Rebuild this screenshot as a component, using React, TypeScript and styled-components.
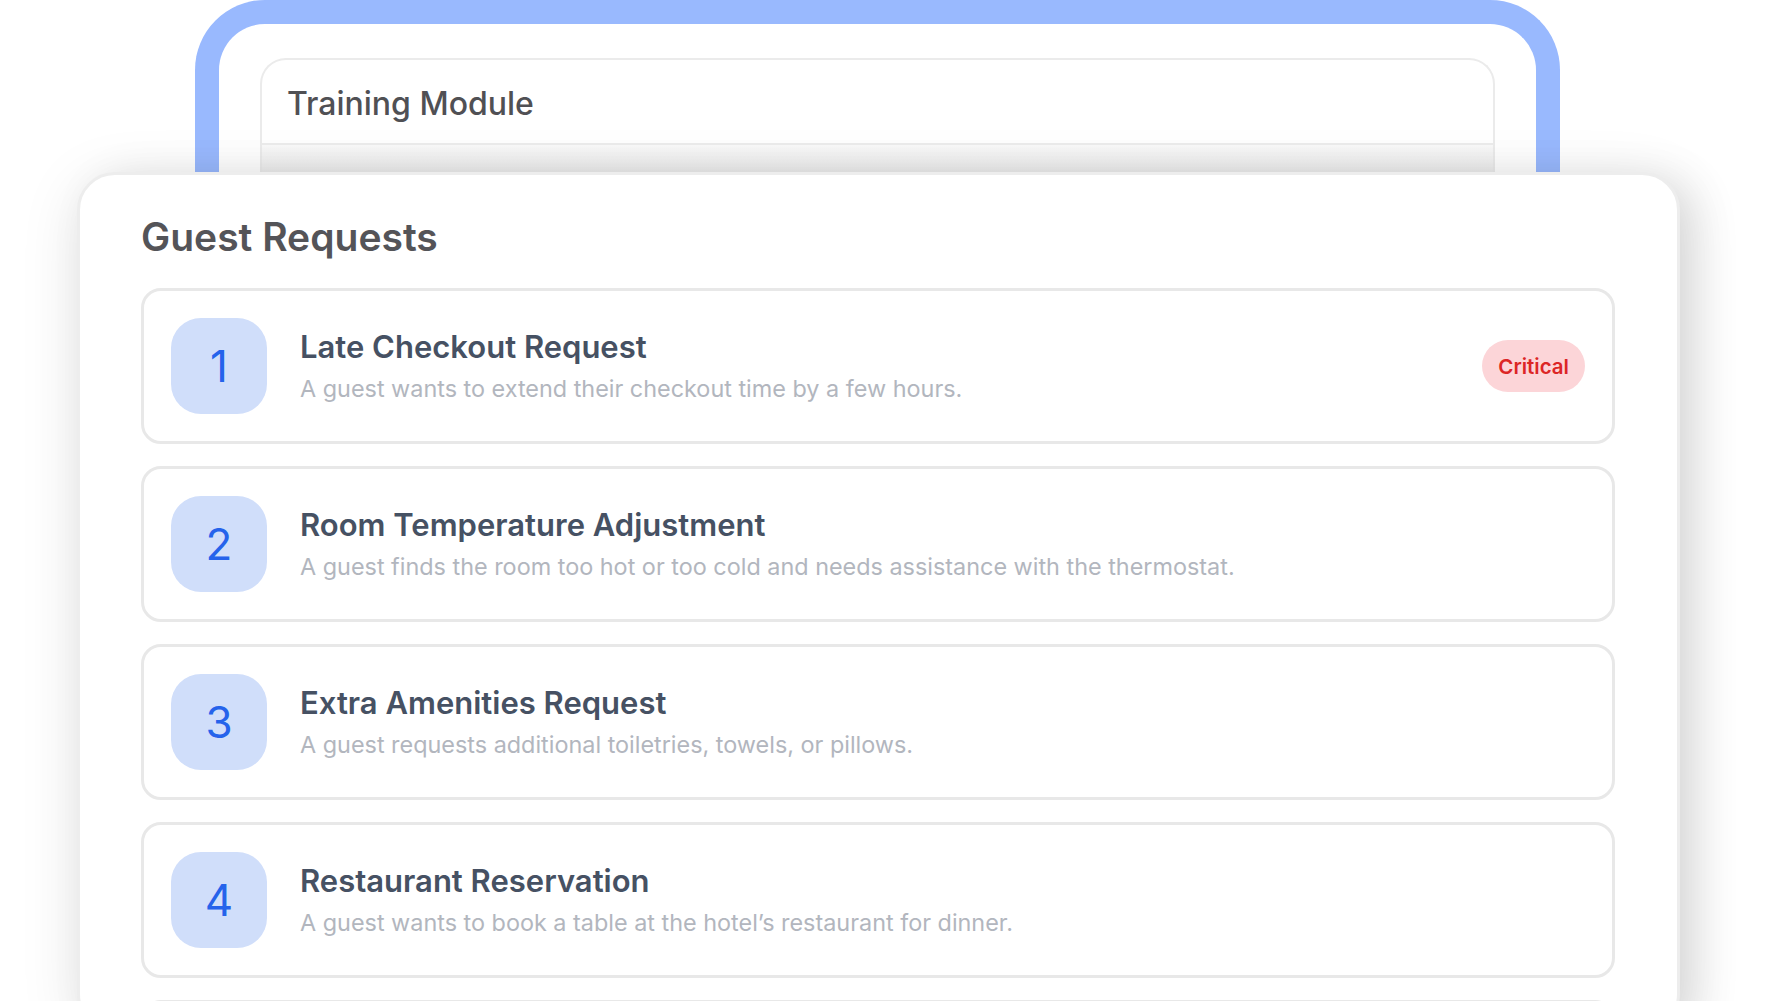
import { FC } from 'react'
import styled, { createGlobalStyle } from 'styled-components'

const GlobalStyle = createGlobalStyle`
  html, body {
    margin: 0;
    padding: 0;
    background: #fff;
    overflow: hidden;
  }
  body {
    font-family: Inter, "Noto Sans", "Liberation Sans", sans-serif;
    -webkit-font-smoothing: antialiased;
  }
  * {
    box-sizing: border-box;
  }
`

const Page = styled.div`
  width: 1765px;
  height: 1001px;
  overflow: hidden;
  background: #fff;
`

const DeviceFrame = styled.div`
  margin-left: 195px;
  width: 1365px;
  height: 172px;
  border: 24px solid #99b9fe;
  border-bottom: none;
  border-radius: 70px 70px 0 0;
  background: #fff;
  padding: 34px 41px 0;
  overflow: hidden;
`

const ModuleCard = styled.div`
  height: 100%;
  border: 2px solid #ebebeb;
  border-bottom: none;
  border-radius: 26px 26px 0 0;
  display: flex;
  flex-direction: column;
  overflow: hidden;
`

const ModuleHeader = styled.div`
  height: 85px;
  flex: none;
  display: flex;
  align-items: center;
  padding: 4px 0 0 25px;
  border-bottom: 2px solid #ececec;
  font-size: 32px;
  line-height: 38px;
  font-weight: 500;
  color: #505054;
`

const ModuleBody = styled.div`
  flex: 1;
  background: linear-gradient(#f9f9f9, #ededed);
`

const Panel = styled.div`
  position: relative;
  z-index: 1;
  margin-left: 77px;
  width: 1603px;
  height: 860px;
  background: #fff;
  border: 3px solid #ededed;
  border-radius: 38px;
  padding: 38px 62px 0 61px;
  box-shadow: 0 10px 60px rgba(0, 0, 0, 0.1), 18px 6px 44px rgba(0, 0, 0, 0.1);
`

const PanelTitle = styled.div`
  font-size: 39px;
  line-height: 48px;
  font-weight: 600;
  color: #545458;
  margin-bottom: 27px;
`

const RequestList = styled.div`
  display: flex;
  flex-direction: column;
  gap: 22px;
`

const RequestCard = styled.div`
  display: flex;
  align-items: center;
  gap: 33px;
  height: 156px;
  padding: 0 27px;
  border: 3px solid #e8e8e8;
  border-radius: 20px;
  background: #fff;
`

const NumberBox = styled.div`
  flex: none;
  width: 96px;
  height: 96px;
  border-radius: 30px;
  background: #d0defa;
  color: #2563eb;
  font-size: 44px;
  font-weight: 400;
  display: flex;
  align-items: center;
  justify-content: center;
`

const RequestText = styled.div`
  flex: 1;
  display: flex;
  flex-direction: column;
  gap: 8px;
`

const RequestTitle = styled.div`
  font-size: 31px;
  line-height: 38px;
  font-weight: 600;
  color: #465163;
`

const RequestDesc = styled.div`
  font-size: 23.4px;
  line-height: 30px;
  color: #b2b6be;
`

const Badge = styled.div<{ $tone: 'critical' }>`
  flex: none;
  height: 52px;
  padding: 0 16px;
  border-radius: 26px;
  display: flex;
  align-items: center;
  font-size: 20.5px;
  font-weight: 600;
  background: ${(p) => (p.$tone === 'critical' ? '#fcd5d8' : '#eee')};
  color: ${(p) => (p.$tone === 'critical' ? '#dc2626' : '#555')};
`

type TRequest = {
  title: string
  desc: string
  critical?: boolean
}

const requests: TRequest[] = [
  {
    title: 'Late Checkout Request',
    desc: 'A guest wants to extend their checkout time by a few hours.',
    critical: true,
  },
  {
    title: 'Room Temperature Adjustment',
    desc: 'A guest finds the room too hot or too cold and needs assistance with the thermostat.',
  },
  {
    title: 'Extra Amenities Request',
    desc: 'A guest requests additional toiletries, towels, or pillows.',
  },
  {
    title: 'Restaurant Reservation',
    desc: 'A guest wants to book a table at the hotel\u2019s restaurant for dinner.',
  },
]

const App: FC = () => {
  return (
    <Page>
      <GlobalStyle />
      <DeviceFrame>
        <ModuleCard>
          <ModuleHeader>Training Module</ModuleHeader>
          <ModuleBody />
        </ModuleCard>
      </DeviceFrame>
      <Panel>
        <PanelTitle>Guest Requests</PanelTitle>
        <RequestList>
          {requests.map((item, index) => (
            <RequestCard key={item.title}>
              <NumberBox>{index + 1}</NumberBox>
              <RequestText>
                <RequestTitle>{item.title}</RequestTitle>
                <RequestDesc>{item.desc}</RequestDesc>
              </RequestText>
              {item.critical && <Badge $tone="critical">Critical</Badge>}
            </RequestCard>
          ))}
          {/* next card, only its top edge is in view */}
          <RequestCard />
        </RequestList>
      </Panel>
    </Page>
  )
}

export default App
